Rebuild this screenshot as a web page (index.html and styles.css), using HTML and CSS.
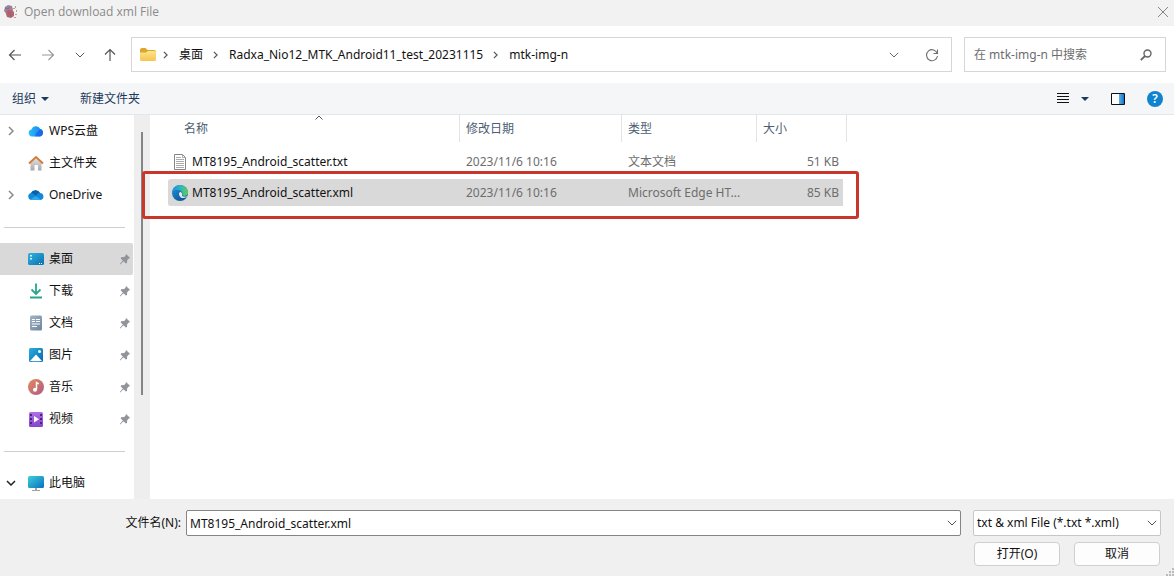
FILE: index.html
```html
<!DOCTYPE html>
<html lang="zh-CN">
<head>
<meta charset="utf-8">
<title>Open download xml File</title>
<link rel="stylesheet" href="styles.css">
</head>
<body>
<svg class="defs" width="0" height="0" aria-hidden="true">
  <defs>
    <linearGradient id="g-blue" x1="0" y1="0" x2="1" y2="1"><stop offset="0" stop-color="#2aaede"/><stop offset="1" stop-color="#0868b0"/></linearGradient>
    <linearGradient id="g-screen" x1="0" y1="0" x2="1" y2="1"><stop offset="0" stop-color="#3ed0d8"/><stop offset="1" stop-color="#0c6fc0"/></linearGradient>
    <linearGradient id="g-desk" x1="0" y1="0" x2="1" y2="1"><stop offset="0" stop-color="#2fb4e0"/><stop offset="1" stop-color="#0d6fae"/></linearGradient>
    <linearGradient id="g-pane" x1="0" y1="0" x2="1" y2="0"><stop offset="0" stop-color="#5cb4ec"/><stop offset="1" stop-color="#1474c4"/></linearGradient>
    <linearGradient id="g-folder" x1="0" y1="0" x2="0" y2="1"><stop offset="0" stop-color="#ffe38a"/><stop offset="1" stop-color="#f4c652"/></linearGradient>
    <linearGradient id="g-wps" x1="0" y1="0" x2="1" y2="0"><stop offset="0" stop-color="#25c0f5"/><stop offset="1" stop-color="#1d7cf2"/></linearGradient>
    <linearGradient id="g-doc" x1="0" y1="0" x2="1" y2="1"><stop offset="0" stop-color="#a3b4c6"/><stop offset="1" stop-color="#6e859e"/></linearGradient>
    <linearGradient id="g-music" x1="0" y1="0" x2="1" y2="1"><stop offset="0" stop-color="#e58a58"/><stop offset="1" stop-color="#ae5a88"/></linearGradient>
    <linearGradient id="g-video" x1="0" y1="0" x2="0" y2="1"><stop offset="0" stop-color="#b06fe4"/><stop offset="1" stop-color="#8443cc"/></linearGradient>
    <linearGradient id="g-house" x1="0" y1="0" x2="0" y2="1"><stop offset="0" stop-color="#e2e2e4"/><stop offset="1" stop-color="#a8a8ac"/></linearGradient>
    <linearGradient id="g-edge" x1="0" y1="0" x2="1" y2="0"><stop offset="0" stop-color="#1f8fdc"/><stop offset=".5" stop-color="#2cb4c0"/><stop offset="1" stop-color="#62cf52"/></linearGradient>
    <linearGradient id="g-edge2" x1="0" y1="0" x2="1" y2="1"><stop offset="0" stop-color="#1f98e0"/><stop offset="1" stop-color="#0c4587"/></linearGradient>
    <symbol id="pin" viewBox="0 0 12 12"><path d="M7 1 11.200 5 9.800 5.500 8.200 7.200 8 10 6.800 10.500 4.500 8.200 1.300 11.500.800 11 3.800 7.600 1.700 5.400 2.200 4.300 5.200 4 6.600 2.400Z" fill="#929598"/></symbol>
    <symbol id="down" viewBox="0 0 10 6"><path d="m.8.8 4.200 4.200L9.200.8" fill="none" stroke="currentColor"/></symbol>
    <symbol id="down-bold" viewBox="0 0 10 6"><path d="m1 1 4 4 4-4" fill="none" stroke="currentColor" stroke-width="1.500"/></symbol>
    <symbol id="right" viewBox="0 0 6 10"><path d="m1 1 4 4-4 4" fill="none" stroke="currentColor" stroke-width="1.500"/></symbol>
  </defs>
</svg>

<header class="titlebar">
  <svg class="icon16" viewBox="0 0 16 16"><path d="M3 3 6 1l4 1 1 4-2 3-5 .5L2 7Z" fill="#9a8299"/><path d="m5 7 5-1 2 2v4l-3 2-4-1-1-3Z" fill="#b8626a"/><path d="m3 4 3 1 2-2M6 9l3 1-1 3" fill="none" stroke="#6a72a4"/><path d="M13 2h1v2h-1zM11 4h2v1h-2zM14 6h1v2h-1zM13 10h2v1h-2zM12 13h2v1h-2z" fill="#bd9aa2"/><path d="m6 6 3 1-1 2-3-1Z" fill="#d8514f"/></svg>
  <h1>Open download xml File</h1>
  <button class="plain" type="button" aria-label="关闭"><svg width="12" height="12" viewBox="0 0 12 12"><path d="m1 1 10 10M11 1 1 11" stroke="#858585"/></svg></button>
</header>

<nav class="navbar">
  <div class="history">
    <button class="plain" type="button" aria-label="后退"><svg width="14" height="12" viewBox="0 0 14 12"><path d="M13 6H1.500M6.500 1l-5 5 5 5" fill="none" stroke="#555" stroke-width="1.200"/></svg></button>
    <button class="plain" type="button" aria-label="前进"><svg width="14" height="12" viewBox="0 0 14 12"><path d="M1 6h11.500M7.500 1l5 5-5 5" fill="none" stroke="#999" stroke-width="1.200"/></svg></button>
    <button class="plain" type="button" aria-label="最近位置"><svg width="10" height="6"><use href="#down"/></svg></button>
    <button class="plain" type="button" aria-label="上移"><svg width="12" height="14" viewBox="0 0 12 14"><path d="M6 13V1.500M1 6.500l5-5 5 5" fill="none" stroke="#555" stroke-width="1.200"/></svg></button>
  </div>
  <div class="address">
    <svg class="folder" width="18" height="16" viewBox="0 0 18 16"><path d="M1 3q0-2 2-2h3.500l2 2H15q2 0 2 2v4H1Z" fill="#dca62c"/><path d="M1 5.500h6L9 4h6.500Q17 4 17 5.500v7q0 1.500-1.500 1.500h-13Q1 14 1 12.500Z" fill="url(#g-folder)"/></svg>
    <svg class="sep" width="5" height="8"><use href="#right"/></svg>
    <a href="#">桌面</a>
    <svg class="sep" width="5" height="8"><use href="#right"/></svg>
    <a href="#">Radxa_Nio12_MTK_Android11_test_20231115</a>
    <svg class="sep" width="5" height="8"><use href="#right"/></svg>
    <a href="#">mtk-img-n</a>
    <span class="address-tools">
      <button class="plain" type="button" aria-label="历史记录"><svg width="10" height="6"><use href="#down"/></svg></button>
      <button class="plain" type="button" aria-label="刷新"><svg width="14" height="14" viewBox="0 0 14 14"><path d="M12.300 5.500A5.500 5.500 0 1 0 12.500 8M12.500 1.500v4h-4" fill="none" stroke="#707070" stroke-width="1.100"/></svg></button>
    </span>
  </div>
  <div class="search">
    <input type="search" aria-label="搜索" placeholder="在 mtk-img-n 中搜索">
    <svg width="12" height="12" viewBox="0 0 12 12"><circle cx="7.500" cy="4.500" r="3.500" fill="none" stroke="#666" stroke-width="1.400"/><path d="M5 7 .800 11.200" stroke="#666" stroke-width="1.800"/></svg>
  </div>
</nav>

<div class="toolbar">
  <button class="plain" type="button">组织 <svg width="8" height="4" viewBox="0 0 8 4"><path d="M0 0h8L4 4Z" fill="#1d3a5c"/></svg></button>
  <button class="plain" type="button">新建文件夹</button>
  <div class="views">
    <button class="plain view" type="button" aria-label="视图"><svg width="12" height="11" viewBox="0 0 12 11"><path d="M0 .5h12M0 3.500h12M0 6.500h12M0 9.500h12" stroke="#111"/></svg><svg width="8" height="4" viewBox="0 0 8 4"><path d="M0 0h8L4 4Z" fill="#1d3a5c"/></svg></button>
    <button class="plain" type="button" aria-label="预览窗格"><svg width="14" height="12" viewBox="0 0 14 12"><path d="M.5.5h13v11H.5z" fill="#fff" stroke="#111"/><path d="M8 1h5v10H8z" fill="url(#g-pane)"/></svg></button>
    <button class="plain help" type="button" aria-label="帮助">?</button>
  </div>
</div>

<main class="browser">
  <aside class="sidebar">
    <ul>
      <li><svg class="expand" width="6" height="10"><use href="#right"/></svg><svg class="icon16" viewBox="0 0 16 16"><path d="M4 13.500a3.500 3.500 0 0 1-.6-6.900A4.800 4.800 0 0 1 12.300 6 3.900 3.900 0 0 1 12 13.500Z" fill="url(#g-wps)"/><path d="M7 13.500q1-5 5.500-7.500A3.900 3.900 0 0 1 12 13.500Z" fill="#1458e8" opacity=".6"/></svg><a href="#">WPS云盘</a></li>
      <li><svg class="icon16" viewBox="0 0 16 16"><path d="M2.500 8 8 3l5.500 5v7.500H10V10H6.500v5.500h-4Z" fill="url(#g-house)"/><path d="M1 8.500 8 2l7 6.500" fill="none" stroke="#d47b35" stroke-width="2"/></svg><a href="#">主文件夹</a></li>
      <li><svg class="expand" width="6" height="10"><use href="#right"/></svg><svg class="icon16" viewBox="0 0 16 16"><path d="M3.500 13A3.500 3.500 0 0 1 3 6.100 5 5 0 0 1 12 6a3.600 3.600 0 0 1 1 7Z" fill="#1488d8"/><path d="M3 6.100A5 5 0 0 1 12 6q-3 0-4 3Q5.500 6.500 3 6.100Z" fill="#0962ae"/><path d="M2 12.700 8 9l5 4H3.500Z" fill="#2cabec"/></svg><a href="#">OneDrive</a></li>
    </ul>
    <hr>
    <ul>
      <li class="current"><svg class="icon16" viewBox="0 0 16 16"><rect y="2" width="16" height="12" rx="1.500" fill="url(#g-desk)"/><path d="M2 4h2v1.500H2zM2 7h2v1.500H2z" fill="#d9f6ff"/><path d="M11 12h1v1h-1zM13 12h1v1h-1z" fill="#fff"/></svg><a href="#">桌面</a><svg class="pin" width="12" height="12"><use href="#pin"/></svg></li>
      <li><svg class="icon16" viewBox="0 0 16 16"><path d="M8 .5v10M3.500 6.500 8 11l4.500-4.500M2 14.500h12" fill="none" stroke="#2aa58c" stroke-width="1.800"/></svg><a href="#">下载</a><svg class="pin" width="12" height="12"><use href="#pin"/></svg></li>
      <li><svg class="icon16" viewBox="0 0 16 16"><rect x="2" y=".5" width="12" height="15" rx="1.500" fill="url(#g-doc)"/><path d="M4 4.500h3M4 6.500h3M8 4.500h4M8 6.500h4M4 9h8M4 11.500h5" stroke="#fff" stroke-width="1.200"/></svg><a href="#">文档</a><svg class="pin" width="12" height="12"><use href="#pin"/></svg></li>
      <li><svg class="icon16" viewBox="0 0 16 16"><rect x="1" y="1" width="14" height="14" rx="1.500" fill="url(#g-blue)"/><path d="m2 14 6-6.500 6 6.500q-6 .6-12 0Z" fill="#fff"/><circle cx="11.500" cy="4.500" r="1.500" fill="#fff"/></svg><a href="#">图片</a><svg class="pin" width="12" height="12"><use href="#pin"/></svg></li>
      <li><svg class="icon16" viewBox="0 0 16 16"><circle cx="8" cy="8" r="8" fill="url(#g-music)"/><path d="M8.500 10.500V3.500l2.300 1.400" fill="none" stroke="#fff" stroke-width="1.500"/><circle cx="7" cy="10.800" r="2" fill="#fff"/></svg><a href="#">音乐</a><svg class="pin" width="12" height="12"><use href="#pin"/></svg></li>
      <li><svg class="icon16" viewBox="0 0 16 16"><rect x="1" y="1" width="14" height="15" rx="1.500" fill="url(#g-video)"/><path d="M2 3h2v2H2zM2 7h2v2H2zM2 11h2v2H2zM12 3h2v2h-2zM12 7h2v2h-2zM12 11h2v2h-2z" fill="#4d2382"/><path d="m6 5 5 3.300-5 3.200Z" fill="#fff"/></svg><a href="#">视频</a><svg class="pin" width="12" height="12"><use href="#pin"/></svg></li>
    </ul>
    <hr>
    <ul>
      <li><svg class="expand open" width="10" height="6"><use href="#down-bold"/></svg><svg class="icon16" viewBox="0 0 16 16"><rect y="1" width="16" height="12" rx="1.500" fill="url(#g-screen)"/><path d="M7 13h2v2H7zM4 15h8v1H4z" fill="#9ba4ad"/></svg><a href="#">此电脑</a></li>
    </ul>
  </aside>
  <div class="scroll"><div class="thumb"></div></div>
  <section class="files">
    <svg class="sort" width="8" height="5" viewBox="0 0 8 5"><path d="m.5 4.500 3.500-3.500 3.500 3.500" fill="none" stroke="#555"/></svg>
    <table>
      <colgroup><col class="c-name"><col class="c-date"><col class="c-type"><col class="c-size"></colgroup>
      <thead><tr><th>名称</th><th>修改日期</th><th>类型</th><th>大小</th></tr></thead>
      <tbody>
        <tr><td><span class="file"><svg class="icon16" viewBox="0 0 16 16"><path d="M2.500.5h8l3 3v12h-11z" fill="#fff" stroke="#858585"/><path d="M10.500.5v3h3M4 3.500h5M4 5.500h8M4 7.500h8M4 9.500h8M4 11.500h8M4 13.500h8" fill="none" stroke="#aaa"/></svg>MT8195_Android_scatter.txt</span></td><td>2023/11/6 10:16</td><td>文本文档</td><td>51 KB</td></tr>
        <tr class="selected"><td><span class="file"><svg class="icon16" viewBox="0 0 16 16"><circle cx="8" cy="8" r="8" fill="url(#g-edge2)"/><path d="M.3 6A8 8 0 0 1 16 7.500c0 2.500-1.700 3.500-3.500 3.500-2 0-3-.8-2.300-1.700C11 7.500 9 5 6 5 3.500 5 1.500 5.500.3 6Z" fill="url(#g-edge)"/><path d="M8.300 6.700c-1.300.8-1.600 2.200-1 3.700 1.100 2.600 4 3.300 7.300 1.700l.6-1c-1 .5-2 .6-3 .5-1.800-.2-2.600-1-2.200-1.900.3-1.200-.5-2.400-1.700-3Z" fill="#dfe9ec"/></svg>MT8195_Android_scatter.xml</span></td><td>2023/11/6 10:16</td><td>Microsoft Edge HT...</td><td>85 KB</td></tr>
      </tbody>
    </table>
    <div class="highlight"></div>
  </section>
</main>

<footer class="footer">
  <label for="filename">文件名(N):</label>
  <div class="combo name">
    <input id="filename" type="text" value="MT8195_Android_scatter.xml">
    <svg width="10" height="6"><use href="#down"/></svg>
  </div>
  <div class="combo type">
    <select aria-label="文件类型"><option>txt &amp; xml File (*.txt *.xml)</option></select>
    <svg width="10" height="6"><use href="#down"/></svg>
  </div>
  <div class="actions">
    <button type="button">打开(O)</button>
    <button type="button">取消</button>
  </div>
  <svg class="grip" width="8" height="8" viewBox="0 0 8 8"><path d="M6 0h2v2H6zM3 3h2v2H3zM6 3h2v2H6zM0 6h2v2H0zM3 6h2v2H3zM6 6h2v2H6z" fill="#bbb"/></svg>
</footer>
</body>
</html>
```
FILE: styles.css
```css
* { box-sizing: border-box; }

body {
  margin: 0;
  min-height: 100vh;
  display: flex;
  flex-direction: column;
  background: #fff;
  color: #111;
  font: 12px/16px "Noto Sans", "Noto Sans CJK SC", sans-serif;
}

svg { display: block; flex: none; }
.defs { position: absolute; }
.icon16 { width: 16px; height: 16px; }
a { color: inherit; text-decoration: none; }

button, input, select { font: inherit; color: inherit; }

.plain {
  display: flex;
  align-items: center;
  padding: 0;
  border: 0;
  background: none;
}

.titlebar {
  display: flex;
  align-items: center;
  gap: 6px;
  height: 26px;
  padding: 0 5px 3px 2px;
  background: #f2f2f2;
  color: #8a8a8a;
}
.titlebar h1 {
  flex: 1;
  margin: 0;
  font-family: "Open Sans", "Noto Sans", sans-serif;
  font-size: 12px;
  font-weight: 400;
}

.navbar {
  display: flex;
  align-items: stretch;
  gap: 12px;
  height: 57px;
  padding: 11px 8px;
}
.history {
  display: flex;
  align-items: center;
  justify-content: space-between;
  width: 111px;
  padding-right: 3px;
  color: #555;
}
.address {
  display: flex;
  flex: 1;
  align-items: center;
  border: 1px solid #d6d6d6;
  padding: 0 12px 0 7px;
}
.sep { margin: 0 11px 0 10px; color: #555; }
.address .folder { margin-right: -4px; }
.address-tools {
  display: flex;
  align-items: center;
  gap: 26px;
  margin-left: auto;
  color: #666;
}
.search {
  display: flex;
  align-items: center;
  width: 202px;
  padding: 0 13px 0 9px;
  border: 1px solid #d6d6d6;
}
.search input { flex: 1; min-width: 0; padding: 0; border: 0; outline: 0; background: none; }
.search input::placeholder { color: #6d6d6d; opacity: 1; }

.toolbar {
  display: flex;
  align-items: center;
  gap: 31px;
  height: 32px;
  padding: 0 11px 0 12px;
  border-bottom: 1px solid #e4e7e9;
  background: #f4f6f8;
  color: #1d3a5c;
}
.toolbar .plain { gap: 5px; }
.views { display: flex; align-items: center; gap: 22px; margin-left: auto; }
.toolbar .view { gap: 12px; }
.toolbar .help {
  justify-content: center;
  width: 16px;
  height: 16px;
  border-radius: 50%;
  background: #1083cf;
  color: #fff;
  font-weight: 600;
}

.browser { display: flex; flex: 1; }

.sidebar { width: 134px; }
.sidebar ul { margin: 0; padding: 0; list-style: none; }
.sidebar li {
  position: relative;
  display: flex;
  align-items: center;
  gap: 5px;
  height: 32px;
  margin-right: 1px;
  padding: 0 2px 0 28px;
}
.sidebar .current { background: #d9d9d9; border-radius: 0 2px 2px 0; }
.sidebar hr { height: 1px; margin: 16px 9px 15px 4px; border: 0; background: #cfcfcf; }
.expand { position: absolute; left: 8px; color: #888; }
.expand.open { left: 6px; color: #222; }
.pin { margin-left: auto; }

.scroll { width: 16px; padding: 17px 7px; background: #eee; }
.thumb { width: 2px; height: 263px; background: #858585; }

.files { position: relative; flex: 1; padding-left: 18px; }
.sort { position: absolute; top: 0; left: 165px; }
table { table-layout: fixed; width: 679px; border-spacing: 0; }
.c-name { width: 292px; }
.c-date { width: 162px; }
.c-type { width: 135px; }
.c-size { width: 90px; }
th {
  height: 31px;
  padding: 0 0 4px 6px;
  background: linear-gradient(#e3e3e3, #e3e3e3) no-repeat right top / 1px 27px;
  color: #4c5d72;
  font-weight: 400;
  text-align: left;
}
th:first-child { padding-left: 16px; }
td {
  height: 31px;
  padding: 0 0 0 6px;
  border: solid transparent;
  border-width: 2px 0;
  background-clip: padding-box;
  color: #6d6d6d;
  white-space: nowrap;
}
td:first-child { padding-left: 4px; border-radius: 4px 0 0 4px; color: #111; }
td:last-child { padding-right: 4px; border-right-width: 4px; border-radius: 0 4px 4px 0; text-align: right; }
.selected td { background-color: #d9d9d9; }
.file { display: flex; align-items: center; gap: 4px; }
.highlight {
  position: absolute;
  top: 56px;
  left: -8px;
  width: 717px;
  height: 48px;
  border: 3px solid #c9372c;
  border-radius: 3px;
  pointer-events: none;
}

.footer {
  position: relative;
  display: grid;
  grid-template-columns: 181px 1fr 188px;
  column-gap: 12px;
  row-gap: 6px;
  align-items: center;
  height: 77px;
  padding: 11px 13px 10px 0;
  background: #f0f0f0;
}
.footer label { text-align: right; }
.combo { display: flex; align-items: center; position: relative; height: 26px; }
.combo.name { margin-left: -7px; }
.combo input, .combo select {
  width: 100%;
  height: 100%;
  margin: 0;
  padding: 0 20px 0 3px;
  border: 1px solid #858585;
  border-radius: 2px;
  outline: 0;
  appearance: none;
  background: #fff;
}
.combo select { border-color: #c6c6c6; }
.combo svg { position: absolute; right: 4px; color: #555; pointer-events: none; }
.actions {
  grid-column: 3;
  display: grid;
  grid-template-columns: 1fr 1fr;
  gap: 14px;
  padding: 0 1px;
}
.actions button {
  height: 24px;
  padding: 0;
  border: 1px solid #cfcfcf;
  border-radius: 4px;
  background: #fdfdfd;
}
.grip { position: absolute; right: 0; bottom: 0; }
```
